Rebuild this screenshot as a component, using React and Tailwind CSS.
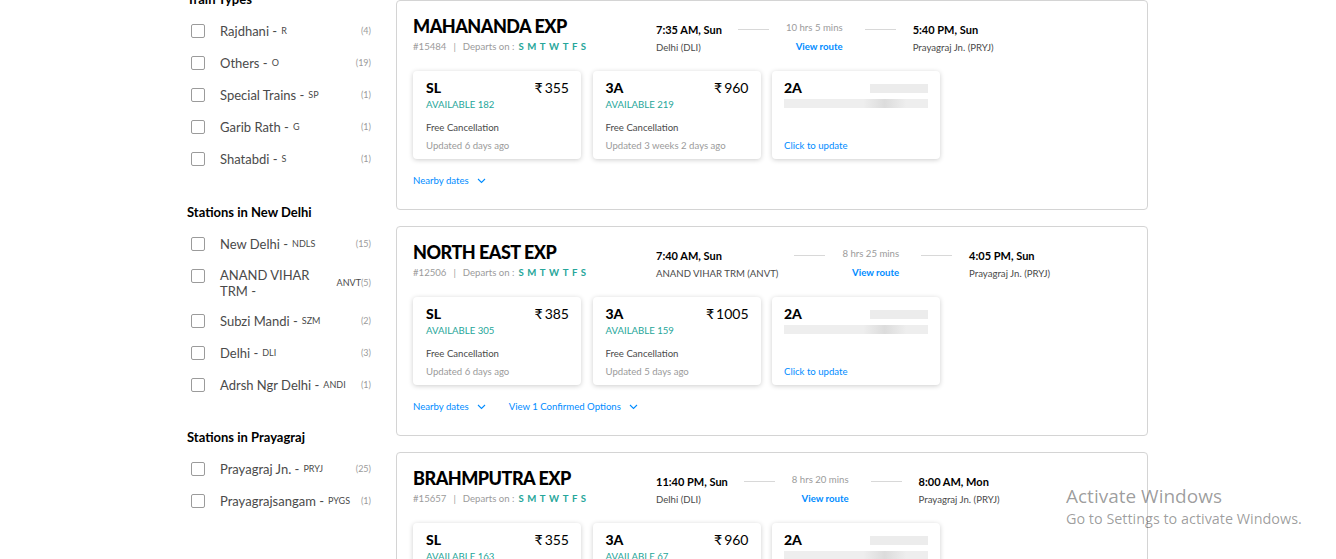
import React from 'react';

/* ─────────────────────────────────────────────
   Sidebar filter data
───────────────────────────────────────────── */
const FILTERS = [
  {
    title: 'Train Types',
    items: [
      { name: 'Rajdhani -', code: 'R', count: 4 },
      { name: 'Others -', code: 'O', count: 19 },
      { name: 'Special Trains -', code: 'SP', count: 1 },
      { name: 'Garib Rath -', code: 'G', count: 1 },
      { name: 'Shatabdi -', code: 'S', count: 1 },
    ],
  },
  {
    title: 'Stations in New Delhi',
    items: [
      { name: 'New Delhi -', code: 'NDLS', count: 15 },
      { name: 'ANAND VIHAR TRM -', code: 'ANVT', count: 5 },
      { name: 'Subzi Mandi -', code: 'SZM', count: 2 },
      { name: 'Delhi -', code: 'DLI', count: 3 },
      { name: 'Adrsh Ngr Delhi -', code: 'ANDI', count: 1 },
    ],
  },
  {
    title: 'Stations in Prayagraj',
    items: [
      { name: 'Prayagraj Jn. -', code: 'PRYJ', count: 25 },
      { name: 'Prayagrajsangam -', code: 'PYGS', count: 1 },
    ],
  },
];

const SECTION_GAP = ['', 'mt-[28px]', 'mt-[27px]'];

const TRAINS = [
  {
    name: 'MAHANANDA EXP',
    number: '#15484',
    depTime: '7:35 AM, Sun',
    depStation: 'Delhi (DLI)',
    duration: '10 hrs 5 mins',
    arrTime: '5:40 PM, Sun',
    arrStation: 'Prayagraj Jn. (PRYJ)',
    fares: [
      { cls: 'SL', price: '355', avail: 'AVAILABLE 182', updated: 'Updated 6 days ago' },
      { cls: '3A', price: '960', avail: 'AVAILABLE 219', updated: 'Updated 3 weeks 2 days ago' },
    ],
    confirmed: false,
  },
  {
    name: 'NORTH EAST EXP',
    number: '#12506',
    depTime: '7:40 AM, Sun',
    depStation: 'ANAND VIHAR TRM (ANVT)',
    duration: '8 hrs 25 mins',
    arrTime: '4:05 PM, Sun',
    arrStation: 'Prayagraj Jn. (PRYJ)',
    fares: [
      { cls: 'SL', price: '385', avail: 'AVAILABLE 305', updated: 'Updated 6 days ago' },
      { cls: '3A', price: '1005', avail: 'AVAILABLE 159', updated: 'Updated 5 days ago' },
    ],
    confirmed: true,
  },
  {
    name: 'BRAHMPUTRA EXP',
    number: '#15657',
    depTime: '11:40 PM, Sun',
    depStation: 'Delhi (DLI)',
    duration: '8 hrs 20 mins',
    arrTime: '8:00 AM, Mon',
    arrStation: 'Prayagraj Jn. (PRYJ)',
    fares: [
      { cls: 'SL', price: '355', avail: 'AVAILABLE 163', updated: 'Updated 6 days ago' },
      { cls: '3A', price: '960', avail: 'AVAILABLE 67', updated: 'Updated 4 days ago' },
    ],
    confirmed: false,
  },
];

const DAYS = ['S', 'M', 'T', 'W', 'T', 'F', 'S'];

/* ── tiny chevron ── */
const Chevron = () => (
  <svg width="9" height="6" viewBox="0 0 9 6" fill="none" className="ml-[8px]">
    <path d="M1 1L4.5 4.5L8 1" stroke="currentColor" strokeWidth="1.1" />
  </svg>
);

/* ── sidebar row ── */
const FilterRow = ({ item }) => (
  <label className="flex items-center min-h-[32px] py-[6.5px] pl-[4px] cursor-pointer">
    <span className="self-start mt-[2.5px] w-[14px] h-[14px] shrink-0 rounded-[2px] border border-[#9b9b9b] bg-white" />
    <span className="ml-[15px] text-[13px] leading-[16px] text-[#4a4a4a]">{item.name}</span>
    <span className="ml-[4px] shrink-0 text-[9px] text-[#4a4a4a] uppercase">{item.code}</span>
    <span className="flex-1" />
    <span className="shrink-0 text-[9px] text-[#9b9b9b]">({item.count})</span>
  </label>
);

/* ── fare box ── */
const FareBox = ({ fare }) => (
  <div className="w-[168px] h-[88px] rounded-[4px] bg-white shadow-[0_1px_5px_rgba(0,0,0,0.2)] pt-[8px] pl-[13px] pr-[12px]">
    <div className="flex items-center justify-between">
      <span className="text-[14px] leading-[18px] font-black text-black">{fare.cls}</span>
      <span className="text-[14px] leading-[18px] text-black">
        ₹<span className="ml-[2px]">{fare.price}</span>
      </span>
    </div>
    <p className="mt-[1px] text-[9.6px] leading-[14px] text-[#26a69a]">{fare.avail}</p>
    <p className="mt-[9px] text-[9.6px] leading-[14px] text-[#4a4a4a]">Free Cancellation</p>
    <p className="mt-[4px] text-[9.6px] leading-[14px] text-[#9b9b9b]">{fare.updated}</p>
  </div>
);

const Skeleton = ({ className }) => (
  <div className={`bg-[linear-gradient(90deg,#eeeeee_55%,#dcdcdc_70%,#eeeeee_85%)] ${className}`} />
);

const PendingBox = () => (
  <div className="w-[168px] h-[88px] rounded-[4px] bg-white shadow-[0_1px_5px_rgba(0,0,0,0.2)] pt-[8px] pl-[12px] pr-[12px] flex flex-col">
    <div className="flex items-center justify-between">
      <span className="text-[14px] leading-[18px] font-black text-black">2A</span>
      <div className="w-[58px] h-[9px] bg-[#ececec]" />
    </div>
    <Skeleton className="mt-[2px] h-[9px] w-full" />
    <p className="mt-auto mb-[6px] text-[9.6px] leading-[14px] text-[#008cff]">Click to update</p>
  </div>
);

/* ── train card ── */
const TrainCard = ({ t }) => (
  <div className="h-[210px] shrink-0 rounded-[4px] border border-[#d4d4d4] bg-white pt-[13px] px-[16px] pb-[21px] flex flex-col">
    <div className="h-[40px] flex items-start">
      <div className="w-[243px] shrink-0">
        <h2 className="text-[18px] leading-[24px] font-black tracking-[-0.5px] text-black">{t.name}</h2>
        <div className="mt-[2px] flex items-center text-[9.6px] leading-[14px] text-[#9b9b9b]">
          <span>{t.number}</span>
          <span className="mx-[7px]">|</span>
          <span>Departs on :</span>
          <span className="ml-[4px] flex gap-[3.5px] font-bold text-[#26a69a]">
            {DAYS.map((d, i) => (
              <span key={i}>{d}</span>
            ))}
          </span>
        </div>
      </div>

      <div className="mt-[8px]">
        <p className="text-[11px] leading-[16px] font-bold text-black">{t.depTime}</p>
        <p className="mt-[3px] text-[9.6px] leading-[14px] text-[#4a4a4a]">{t.depStation}</p>
      </div>
      <div className="ml-[16px] mt-[15px] w-[31px] h-px bg-[#d8d8d8]" />
      <div className="ml-[17px] mt-[7px] text-right">
        <p className="text-[9.6px] leading-[14px] text-[#9b9b9b]">{t.duration}</p>
        <p className="mt-[5px] text-[9.6px] leading-[14px] font-bold text-[#008cff]">View route</p>
      </div>
      <div className="ml-[22px] mt-[15px] w-[31px] h-px bg-[#d8d8d8]" />
      <div className="ml-[17px] mt-[8px]">
        <p className="text-[11px] leading-[16px] font-bold text-black">{t.arrTime}</p>
        <p className="mt-[3px] text-[9.6px] leading-[14px] text-[#4a4a4a]">{t.arrStation}</p>
      </div>
    </div>

    <div className="mt-[17px] flex gap-[11.5px]">
      {t.fares.map((f) => (
        <FareBox key={f.cls} fare={f} />
      ))}
      <PendingBox />
    </div>

    <div className="mt-[15px] flex items-center text-[9.6px] leading-[14px] text-[#008cff]">
      <span className="flex items-center">
        Nearby dates
        <Chevron />
      </span>
      {t.confirmed && (
        <span className="ml-[23px] flex items-center">
          View 1 Confirmed Options
          <Chevron />
        </span>
      )}
    </div>
  </div>
);

export default function App() {
  return (
    <div className="relative h-[559px] overflow-hidden bg-white font-['Lato',sans-serif]">
      <div className="w-[962px] mx-auto flex items-start">
        {/* ── Filters ── */}
        <aside className="w-[184px] shrink-0 -mt-[10px]">
          {FILTERS.map((sec, i) => (
            <div key={sec.title} className={SECTION_GAP[i]}>
              <h3 className="text-[13px] leading-[18px] font-bold text-black">{sec.title}</h3>
              <div className="mt-[7px]">
                {sec.items.map((it) => (
                  <FilterRow key={it.code} item={it} />
                ))}
              </div>
            </div>
          ))}
        </aside>

        {/* ── Train list ── */}
        <main className="ml-[25px] w-[752px] flex flex-col gap-[16px]">
          {TRAINS.map((t) => (
            <TrainCard key={t.number} t={t} />
          ))}
        </main>
      </div>

      {/* ── Windows watermark ── */}
      <div className="absolute left-[1066px] top-[484px] pointer-events-none font-['Open_Sans',sans-serif] text-black/40">
        <p className="text-[19px] leading-[24px]">Activate Windows</p>
        <p className="text-[14.4px] leading-[21px]">Go to Settings to activate Windows.</p>
      </div>
    </div>
  );
}
